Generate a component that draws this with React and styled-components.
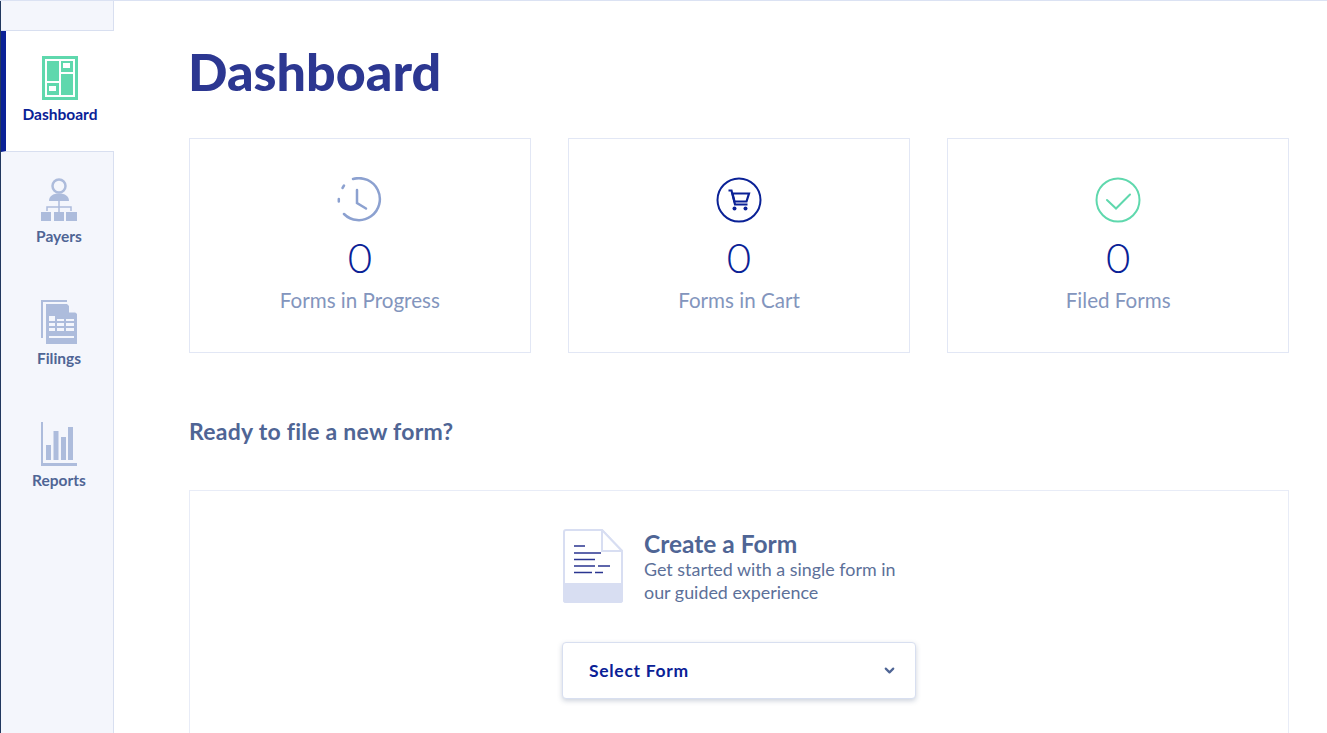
import styled, { createGlobalStyle } from 'styled-components';
import { ChevronDown } from 'lucide-react';

const GlobalStyle = createGlobalStyle`
    html, body {
        margin: 0;
        height: 100%;
        overflow: hidden;
        background: #fff;
    }
    body {
        font-family: "Lato", "Noto Sans", sans-serif;
    }
`;

const DashboardIcon = () => (
    <svg width="36" height="44" viewBox="0 0 36 44">
        <rect width="36" height="44" fill="#5fd8ad" />
        <rect x="3" y="3" width="30" height="38" fill="#fff" />
        <rect x="5" y="5" width="12" height="20" fill="#5fd8ad" />
        <rect x="19" y="5" width="12" height="11" fill="#5fd8ad" />
        <rect x="21" y="7" width="7" height="5" fill="#fff" />
        <rect x="19" y="18" width="12" height="21" fill="#5fd8ad" />
        <rect x="5" y="27" width="12" height="12" fill="#5fd8ad" />
        <rect x="7" y="30" width="7" height="5" fill="#fff" />
    </svg>
);

const PayersIcon = () => (
    <svg width="36" height="44" viewBox="0 0 36 44" fill="#adbcdc">
        <circle cx="18" cy="8" r="6.500" fill="none" stroke="#adbcdc" strokeWidth="2.500" />
        <path d="M8 23c0-5 4-7.500 10-7.500s10 2.500 10 7.500z" />
        <path d="M18 23v11M6 33v-4h24v4" fill="none" stroke="#adbcdc" strokeWidth="1.500" />
        <rect x="0" y="34" width="10" height="9" />
        <rect x="13" y="34" width="10" height="9" />
        <rect x="25" y="34" width="11" height="9" />
    </svg>
);

const FilingsIcon = () => (
    <svg width="36" height="44" viewBox="0 0 36 44" fill="#adbcdc">
        <path d="M0 0h26v2H2v36H0z" />
        <path d="M5 4h21l10 10v30H5z" />
        <path d="M28 5l7 7.500h-7z" fill="#f4f6fc" />
        <rect x="8" y="16" width="6" height="5" fill="#f4f6fc" />
        <rect x="8" y="23" width="6" height="3" fill="#f4f6fc" />
        <rect x="16" y="19" width="7" height="2" fill="#f4f6fc" />
        <rect x="25" y="19" width="8" height="2" fill="#f4f6fc" />
        <rect x="16" y="23" width="7" height="3" fill="#f4f6fc" />
        <rect x="25" y="23" width="8" height="3" fill="#f4f6fc" />
        <rect x="8" y="28" width="6" height="3" fill="#f4f6fc" />
        <rect x="16" y="28" width="7" height="3" fill="#f4f6fc" />
        <rect x="25" y="28" width="8" height="3" fill="#f4f6fc" />
        <rect x="8" y="36" width="25" height="2" fill="#f4f6fc" />
    </svg>
);

const ReportsIcon = () => (
    <svg width="36" height="44" viewBox="0 0 36 44" fill="#adbcdc">
        <path d="M0 0h2v41h34v3H0z" />
        <rect x="5" y="23" width="5" height="15" />
        <rect x="12.500" y="9" width="5" height="29" />
        <rect x="20" y="15" width="5" height="23" />
        <rect x="27" y="5" width="5" height="33" />
    </svg>
);

const ClockIcon = () => (
    <svg width="46" height="46" viewBox="0 0 46 46" fill="none" stroke="#8ca1d0" strokeWidth="2.500" strokeLinecap="round">
        <path d="M16 2A21 21 0 1 1 7 37" />
        <path d="M5.500 11l1.500-2.500M1.800 22v2.500" />
        <path d="M20 13v13l9 5.500" />
    </svg>
);

const CartIcon = () => (
    <svg width="46" height="46" viewBox="0 0 46 46" fill="none" stroke="#0a2196" strokeWidth="2">
        <circle cx="23" cy="23" r="21.500" />
        <path d="M12.500 13.500h3l3.500 14h12.500" strokeWidth="2.200" />
        <path d="M16.500 16.500h16.500l-2.500 8H18.500z" strokeWidth="2.200" />
        <circle cx="18.500" cy="31.500" r="2" fill="#0a2196" stroke="none" />
        <circle cx="29.500" cy="31.500" r="2" fill="#0a2196" stroke="none" />
    </svg>
);

const CheckIcon = () => (
    <svg width="46" height="46" viewBox="0 0 46 46" fill="none" stroke="#5fd8ad" strokeWidth="2" strokeLinecap="round">
        <circle cx="23" cy="23" r="21.500" />
        <path d="M12 23l9 8.500 14-14" />
    </svg>
);

const FormIcon = () => (
    <svg width="60" height="74" viewBox="0 0 60 74">
        <path d="M3 1h36l20 21v49a2 2 0 0 1-2 2H3a2 2 0 0 1-2-2V3a2 2 0 0 1 2-2z" fill="#fff" stroke="#d8def2" strokeWidth="2" />
        <path d="M39 1v21h20z" fill="#fff" stroke="#d8def2" strokeWidth="2" />
        <path d="M0 54h60v17a3 3 0 0 1-3 3H3a3 3 0 0 1-3-3z" fill="#d8def2" />
        <path d="M11 17h11M11 24h27M11 30.500h21M11 37h21M35 37h12M11 43.500h18M32 43.500h8" stroke="#2a3590" strokeWidth="1.500" />
    </svg>
);

const navItems = [
    { label: 'Dashboard', Icon: DashboardIcon, active: true },
    { label: 'Payers', Icon: PayersIcon },
    { label: 'Filings', Icon: FilingsIcon },
    { label: 'Reports', Icon: ReportsIcon },
];

const stats = [
    { label: 'Forms in Progress', Icon: ClockIcon },
    { label: 'Forms in Cart', Icon: CartIcon },
    { label: 'Filed Forms', Icon: CheckIcon },
];

export default function App() {
    return (
        <Page>
            <GlobalStyle />
            <Sidebar>
                <SidebarTop />
                {navItems.map(({ label, Icon, active }) => (
                    <NavItem key={label} $active={active}>
                        <Icon />
                        <NavLabel $active={active}>{label}</NavLabel>
                    </NavItem>
                ))}
            </Sidebar>
            <Main>
                <Title>Dashboard</Title>
                <StatsRow>
                    {stats.map(({ label, Icon }) => (
                        <StatCard key={label}>
                            <Icon />
                            <StatValue>0</StatValue>
                            <StatLabel>{label}</StatLabel>
                        </StatCard>
                    ))}
                </StatsRow>
                <SubTitle>Ready to file a new form?</SubTitle>
                <Panel>
                    <CreateRow>
                        <FormIcon />
                        <CreateText>
                            <CreateTitle>Create a Form</CreateTitle>
                            <CreateInfo>Get started with a single form in<br />our guided experience</CreateInfo>
                        </CreateText>
                    </CreateRow>
                    <SelectBox>
                        Select Form
                        <ChevronDown size={15} strokeWidth={3.5} color="#4f6595" />
                    </SelectBox>
                </Panel>
            </Main>
        </Page>
    );
}

const Page = styled.div`
    display: flex;
    height: 733px;
    overflow: hidden;
    border-top: 1px solid #dbe2f3;
    box-sizing: border-box;
`;

const Sidebar = styled.nav`
    flex: 0 0 114px;
    box-sizing: border-box;
    background-color: #f4f6fc;
    border-left: 1px solid #21385f;
    border-right: 1px solid #d8dff0;
`;

const SidebarTop = styled.div`
    height: 29px;
    border-bottom: 1px solid #d8dff0;
`;

const NavItem = styled.div`
    height: 122px;
    box-sizing: border-box;
    display: flex;
    flex-direction: column;
    align-items: center;
    padding: 26px 0 0 4px;
    ${p => p.$active && `
        height: 121px;
        margin-right: -1px;
        padding: 25px 0 0 0;
        background-color: #fff;
        border-left: 5px solid #0a2196;
        border-bottom: 1px solid #d8dff0;
    `}
`;

const NavLabel = styled.span`
    margin-top: 5px;
    font-size: 15.500px;
    font-weight: 700;
    color: ${p => (p.$active ? '#0a2196' : '#4f6595')};
`;

const Main = styled.main`
    flex: 1;
    padding: 0 38px 0 75px;
`;

const Title = styled.h1`
    margin: 38px 0 35px -1px;
    font-size: 52px;
    line-height: 64px;
    font-weight: 900;
    color: #2c3791;
`;

const StatsRow = styled.div`
    display: grid;
    grid-template-columns: repeat(3, 1fr);
    gap: 37.500px;
`;

const StatCard = styled.div`
    height: 215px;
    box-sizing: border-box;
    border: 1px solid #e2e7f5;
    display: flex;
    flex-direction: column;
    align-items: center;
    padding-top: 38px;
`;

const StatValue = styled.div`
    margin-top: 9px;
    font-size: 42px;
    line-height: 50px;
    font-weight: 300;
    color: #0a2196;
`;

const StatLabel = styled.div`
    margin-top: 5px;
    font-size: 20.600px;
    line-height: 26px;
    color: #8395bd;
`;

const SubTitle = styled.h2`
    margin: 64px 0 45px;
    font-size: 23px;
    line-height: 28px;
    font-weight: 700;
    letter-spacing: 0.25px;
    color: #4f6595;
`;

const Panel = styled.section`
    height: 300px;
    border: 1px solid #e8ecf7;
    display: flex;
    flex-direction: column;
    align-items: center;
    padding-top: 38px;
`;

const CreateRow = styled.div`
    width: 353px;
    padding-left: 1px;
    display: flex;
    gap: 21px;
`;

const CreateTitle = styled.div`
    font-size: 24.500px;
    line-height: 29px;
    font-weight: 700;
    color: #4f6595;
`;

const CreateText = styled.div``;

const CreateInfo = styled.div`
    font-size: 17.900px;
    line-height: 23px;
    color: #5c7099;
`;

const SelectBox = styled.div`
    margin-top: 38px;
    width: 354px;
    height: 57px;
    box-sizing: border-box;
    padding: 0 18px 0 26px;
    display: flex;
    align-items: center;
    justify-content: space-between;
    background: #fff;
    border: 1px solid #d8dff0;
    border-radius: 4px;
    box-shadow: 0 2px 5px rgba(60, 80, 120, 0.25);
    font-size: 17.500px;
    font-weight: 700;
    letter-spacing: 0.7px;
    color: #0a2196;
`;
